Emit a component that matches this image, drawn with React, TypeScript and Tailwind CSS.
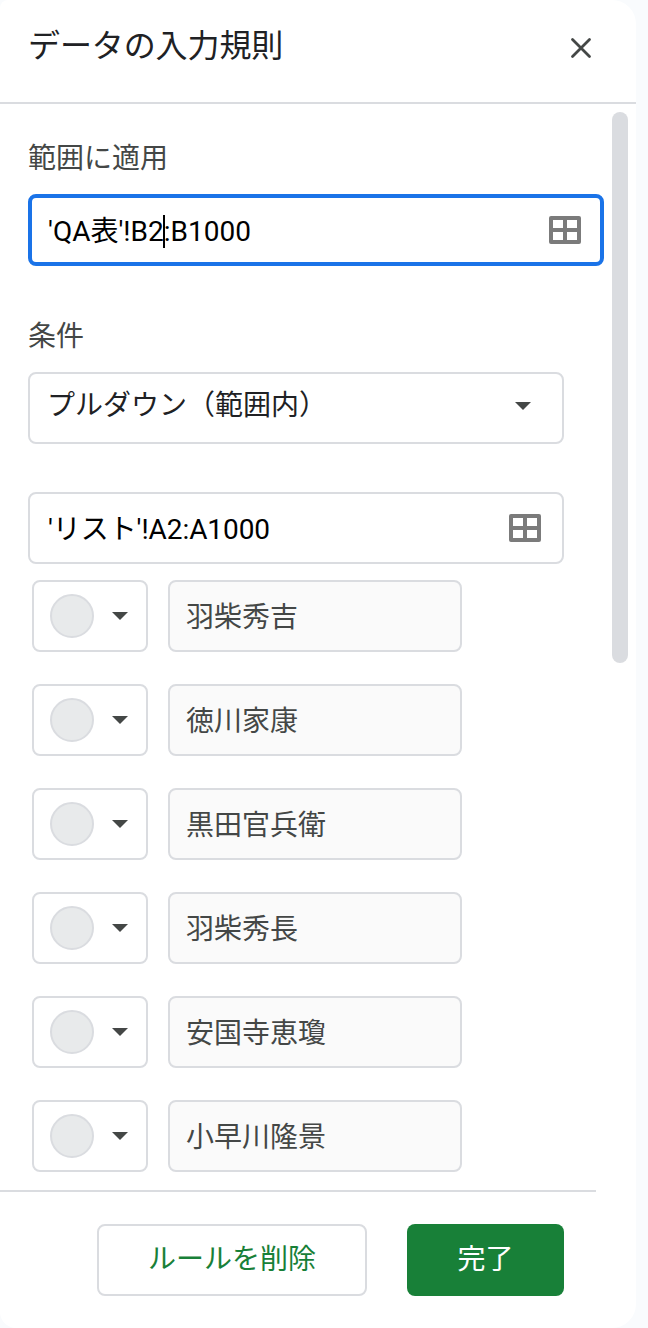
import React, { useState } from 'react';

const GridIcon = () => (
  <svg width="32" height="28" viewBox="0 0 32 28" className="shrink-0">
    <path
      fill="#7b7b7b"
      fillRule="evenodd"
      d="M2 0H30Q32 0 32 2V26Q32 28 30 28H2Q0 28 0 26V2Q0 0 2 0ZM4 4V12H14V4ZM18 4V12H28V4ZM4 16V24H14V16ZM18 16V24H28V16Z"
    />
  </svg>
);

const Caret = () => (
  <svg width="16" height="8" viewBox="0 0 16 8" className="shrink-0">
    <path d="M0 0H16L8 8Z" fill="#444746" />
  </svg>
);

interface ItemRowProps {
  name: string;
}

const ItemRow: React.FC<ItemRowProps> = ({ name }) => (
  <div className="flex gap-5">
    <button type="button" className="flex h-[72px] w-[116px] items-center gap-[18px] rounded-lg border-2 border-[#dadce0] pl-4">
      <span className="size-11 rounded-full border-2 border-[#dadce0] bg-[#e8eaeb]" />
      <Caret />
    </button>
    <div className="flex h-[72px] w-[294px] items-center rounded-lg border-2 border-[#dadce0] bg-[#fafafa] px-4 pt-1 text-[#444746]">
      {name}
    </div>
  </div>
);

const App: React.FC = () => {
  const [items] = useState(['羽柴秀吉', '徳川家康', '黒田官兵衛', '羽柴秀長', '安国寺恵瓊', '小早川隆景']);

  return (
    <div className="h-[1328px] w-[648px] overflow-hidden bg-[#f9fbfd] font-[Roboto,'Noto_Sans_CJK_JP',sans-serif] text-[28px] leading-10">
      <div className="flex h-full w-[636px] flex-col rounded-tl-lg rounded-r-3xl rounded-bl-2xl bg-white">
        <header className="flex h-[104px] shrink-0 items-start justify-between border-b-2 border-[#dadce0] pt-[22px] pr-[45px] pl-7">
          <h1 className="text-[32px] leading-[48px] tracking-[-0.1px] text-[#202124]">データの入力規則</h1>
          <button type="button" aria-label="閉じる" className="mt-4">
            <svg width="20" height="20" viewBox="0 0 20 20" className="block overflow-visible">
              <path d="M1.5 1.5L18.5 18.5M18.5 1.5L1.5 18.5" stroke="#444746" strokeWidth="2.8" strokeLinecap="round" />
            </svg>
          </button>
        </header>

        <main className="flex h-[1086px] shrink-0 justify-between overflow-hidden pr-2 pl-7">
          <div>
            <div className="mt-[35px] text-[#444746]">範囲に適用</div>
            <div className="mt-[15px] flex h-[72px] w-[576px] items-center justify-between rounded-lg border-4 border-[#1a73e8] pr-[19px] pl-4 text-black">
              <span className="pt-1">
                'QA表'!B2
                <span className="relative">
                  <span className="absolute top-0 left-[-1px] h-[33px] w-0.5 bg-black" />
                  :B1000
                </span>
              </span>
              <GridIcon />
            </div>

            <div className="mt-[51px] text-[#444746]">条件</div>
            <div className="mt-[15px] flex h-[72px] w-[536px] items-center justify-between rounded-lg border-2 border-[#dadce0] pr-[31px] pb-1 pl-[17px] text-[#202124]">
              <span>プルダウン（範囲内）</span>
              <Caret />
            </div>

            <div className="mt-12 flex h-[72px] w-[536px] items-center justify-between rounded-lg border-2 border-[#dadce0] pr-[21px] pl-[18px] text-black">
              <span className="pt-1 tracking-[-0.07px]">'リスト'!A2:A1000</span>
              <GridIcon />
            </div>
            <div className="mt-4 ml-1 flex flex-col gap-8">
              {items.map((name) => (
                <ItemRow key={name} name={name} />
              ))}
            </div>
          </div>
          <div className="mt-2 h-[551px] w-4 rounded-full bg-[#dadce0]" />
        </main>

        <footer className="flex h-[138px] w-[596px] shrink-0 justify-end gap-10 border-t-2 border-[#dadce0] pt-8 pr-8">
          <button type="button" className="h-[72px] w-[270px] rounded-lg border-2 border-[#dadce0] text-[#188038]">
            ルールを削除
          </button>
          <button type="button" className="h-[72px] w-[157px] rounded-lg bg-[#188038] text-white">
            完了
          </button>
        </footer>
      </div>
    </div>
  );
};

export default App;
